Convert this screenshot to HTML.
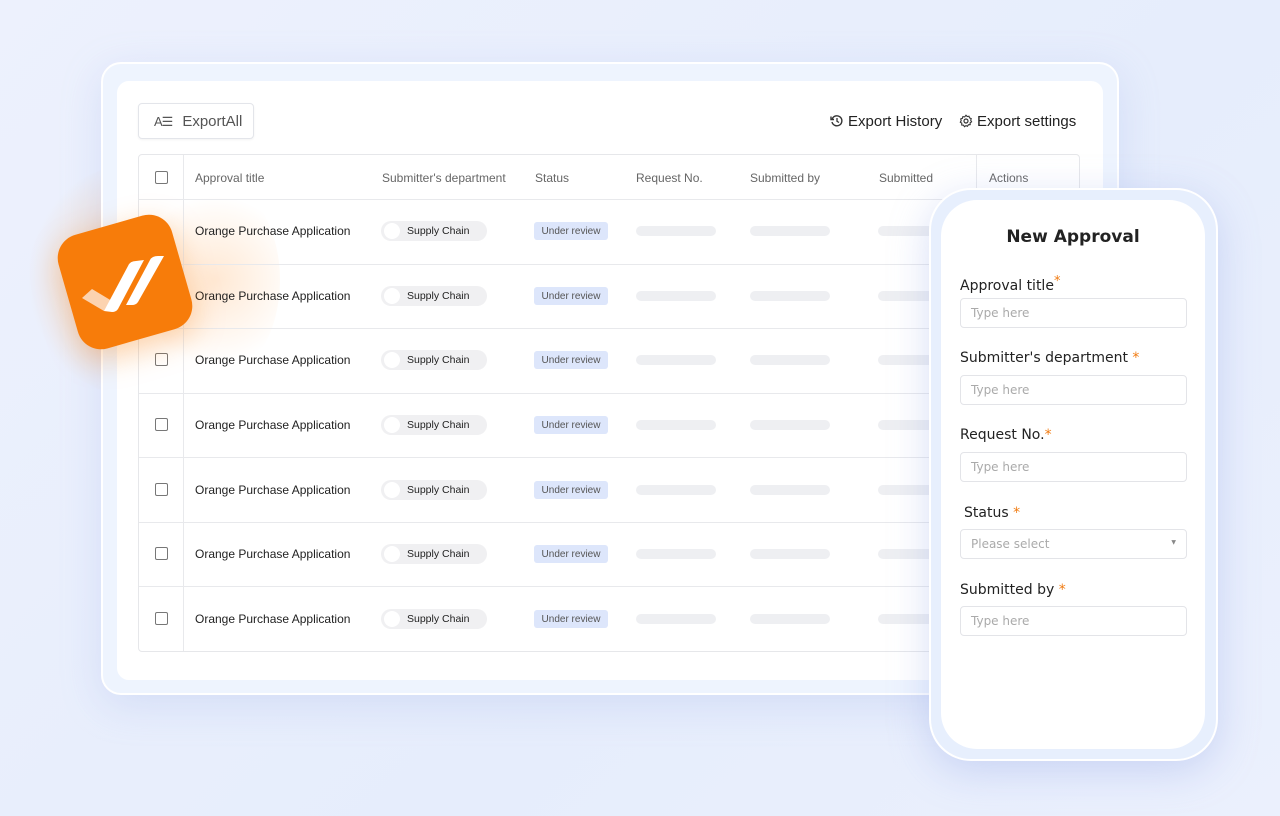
<!DOCTYPE html>
<html><head><meta charset="utf-8"><style>
*{margin:0;padding:0;box-sizing:border-box}
body{width:1280px;height:816px;overflow:hidden;background:linear-gradient(135deg,#edf1fd,#e6edfc 60%,#ebf0fd);font-family:"Liberation Sans",sans-serif;position:relative;white-space:nowrap}
.abs{position:absolute}
.frame{left:101px;top:62px;width:1018px;height:633px;border-radius:20px;background:#eef4fe;border:2px solid #fff;box-shadow:0 10px 40px rgba(150,170,230,.25)}
.card{left:117px;top:81px;width:986px;height:599px;border-radius:12px;background:#fff}
.btn{left:138px;top:103px;width:116px;height:36px;border:1px solid #e3e5ea;border-radius:4px;font-size:15px;color:#555;padding:9px 0 0 15px;box-shadow:0 1px 2px rgba(0,0,0,.05)}
.top{top:113px;font-size:15px;color:#222}
.table{left:138px;top:154px;width:942px;height:498px;border:1px solid #e6e7ea;border-radius:4px}
.hline{position:absolute;left:0;right:0;height:1px;background:#e8e9ec}
.vline{position:absolute;top:0;bottom:0;width:1px;background:#e8e9ec}
.th{position:absolute;top:16px;font-size:12px;color:#666}
.cb{position:absolute;left:16px;width:13px;height:13px;border:1.5px solid #777;border-radius:2px}
.td{position:absolute;font-size:12px;color:#222}
.pill{position:absolute;left:243px;width:106px;height:20px;background:#f0f0f2;border-radius:10px;font-size:10.5px;color:#222;padding:4px 0 0 26px}
.pill:before{content:"";position:absolute;left:3px;top:2px;width:16px;height:16px;border-radius:50%;background:#fff}
.tag{position:absolute;left:396px;width:74px;height:18px;background:#dde6fb;border-radius:3px;font-size:10px;color:#555;text-align:center;padding-top:4px}
.bar{position:absolute;height:10px;border-radius:5px;background:#eeeff2}
.phone{left:929px;top:188px;width:289px;height:573px;border-radius:42px;background:#e7effd;border:2px solid #fff;box-shadow:0 10px 40px rgba(140,160,230,.35)}
.screen{left:941px;top:200px;width:264px;height:549px;border-radius:36px;background:#fff}
.lbl{position:absolute;left:960px;color:#222;font-family:"DejaVu Sans","Liberation Sans",sans-serif;font-size:14px}
.lbl b{color:#f07a10;font-weight:normal}
.inp{position:absolute;left:960px;width:227px;height:30px;border:1px solid #e3e4e8;border-radius:4px;color:#aaa;padding:7px 0 0 10px;font-family:"DejaVu Sans","Liberation Sans",sans-serif;font-size:12px}
</style></head><body>
<div class="abs" style="left:20px;top:160px;width:270px;height:240px;border-radius:50%;background:radial-gradient(circle,rgba(255,165,80,.5),rgba(255,200,150,0) 70%)"></div>
<div class="abs frame"></div>
<div class="abs card"></div>
<div class="abs" style="left:150px;top:180px;width:130px;height:200px;border-radius:50%;background:radial-gradient(circle,rgba(255,190,130,.35),rgba(255,220,190,0) 70%)"></div>
<div class="abs btn"><span style="font-size:13px;letter-spacing:-1px;margin-right:10px">A☰</span>ExportAll</div>
<div class="abs top" style="left:830px">
<svg width="14" height="14" viewBox="0 0 14 14" style="vertical-align:-2px;margin-right:4px"><path d="M2.2 5A5 5 0 1 1 2 8" fill="none" stroke="#333" stroke-width="1.4"/><path d="M1 2.5V5.5H4" fill="none" stroke="#333" stroke-width="1.4"/><path d="M7 4V7.3L9 8.5" fill="none" stroke="#333" stroke-width="1.3"/></svg>Export History</div>
<div class="abs top" style="left:959px">
<svg width="14" height="14" viewBox="0 0 14 14" style="vertical-align:-2px;margin-right:4px"><circle cx="7" cy="7" r="2" fill="none" stroke="#333" stroke-width="1.2"/><path d="M7 1.2l1.2 1.3 1.8-.3.5 1.7 1.7.7-.5 1.7.9 1.5-1.5 1 .1 1.8-1.8.2-1 1.5L7 11.6l-1.5 1.1-1-1.5-1.8-.2.1-1.8-1.5-1 .9-1.5L1.7 5l1.7-.7.5-1.7 1.8.3z" fill="none" stroke="#333" stroke-width="1.1"/></svg>Export settings</div>
<div class="abs table">
<div class="vline" style="left:44px"></div><div class="vline" style="left:837px;height:44px"></div>
<div class="cb" style="top:16px"></div>
<div class="th" style="left:56px">Approval title</div>
<div class="th" style="left:243px">Submitter's department</div>
<div class="th" style="left:396px">Status</div>
<div class="th" style="left:497px">Request No.</div>
<div class="th" style="left:611px">Submitted by</div>
<div class="th" style="left:740px">Submitted</div>
<div class="th" style="left:850px">Actions</div>
<div class="hline" style="top:44px"></div>
<div class="hline" style="top:109px"></div><div class="hline" style="top:173px"></div><div class="hline" style="top:238px"></div><div class="hline" style="top:302px"></div><div class="hline" style="top:367px"></div><div class="hline" style="top:431px"></div>
</div>
<div class="abs" style="left:138px;top:199px" id="rows"></div>
<script>
var h='';var tops=[231,296,360,425,490,554,619];
tops.forEach(function(t){var y=t-199;
h+='<div class="cb" style="left:17px;top:'+(y-7)+'px"></div>';
h+='<div class="td" style="left:57px;top:'+(y-7)+'px">Orange Purchase Application</div>';
h+='<div class="pill" style="top:'+(y-10)+'px">Supply Chain</div>';
h+='<div class="tag" style="top:'+(y-9)+'px">Under review</div>';
h+='<div class="bar" style="left:498px;width:80px;top:'+(y-5)+'px"></div>';
h+='<div class="bar" style="left:612px;width:80px;top:'+(y-5)+'px"></div>';
h+='<div class="bar" style="left:740px;width:60px;top:'+(y-5)+'px"></div>';});
document.getElementById('rows').innerHTML=h;
</script>
<div class="abs" style="left:66px;top:223px;width:118px;height:118px;border-radius:24px;background:#f77c0a;transform:rotate(-16deg);box-shadow:0 10px 30px rgba(247,124,10,.35)"></div>
<svg class="abs" style="left:66px;top:223px" width="118" height="118" viewBox="0 0 118 118">
<path d="M16 75L26 66L46 78L38 88Z" fill="#fcd3b0"/>
<path d="M38 88L62 43Q64 38 70 38L78 37L52 86Q50 89 46 89Z" fill="#fff"/>
<path d="M60 82L84 37Q86 33 92 33L98 33L72 79Q70 82 66 82Z" fill="#fff"/>
</svg>
<div class="abs phone"></div>
<div class="abs screen"></div>
<div class="abs" style="left:941px;top:227px;width:264px;text-align:center;font-family:'DejaVu Sans',sans-serif;font-weight:bold;font-size:17px;color:#222">New Approval</div>
<div class="lbl" style="top:274px">Approval title<b style="vertical-align:5px;font-size:13px">*</b></div>
<div class="inp" style="top:298px">Type here</div>
<div class="lbl" style="top:350px">Submitter's department <b>*</b></div>
<div class="inp" style="top:375px">Type here</div>
<div class="lbl" style="top:427px">Request No.<b>*</b></div>
<div class="inp" style="top:452px">Type here</div>
<div class="lbl" style="top:505px;left:964px">Status <b>*</b></div>
<div class="inp" style="top:529px">Please select<span style="position:absolute;right:10px;top:9px;font-size:6px;color:#888">▼</span></div>
<div class="lbl" style="top:582px">Submitted by <b>*</b></div>
<div class="inp" style="top:606px">Type here</div>
</body></html>
